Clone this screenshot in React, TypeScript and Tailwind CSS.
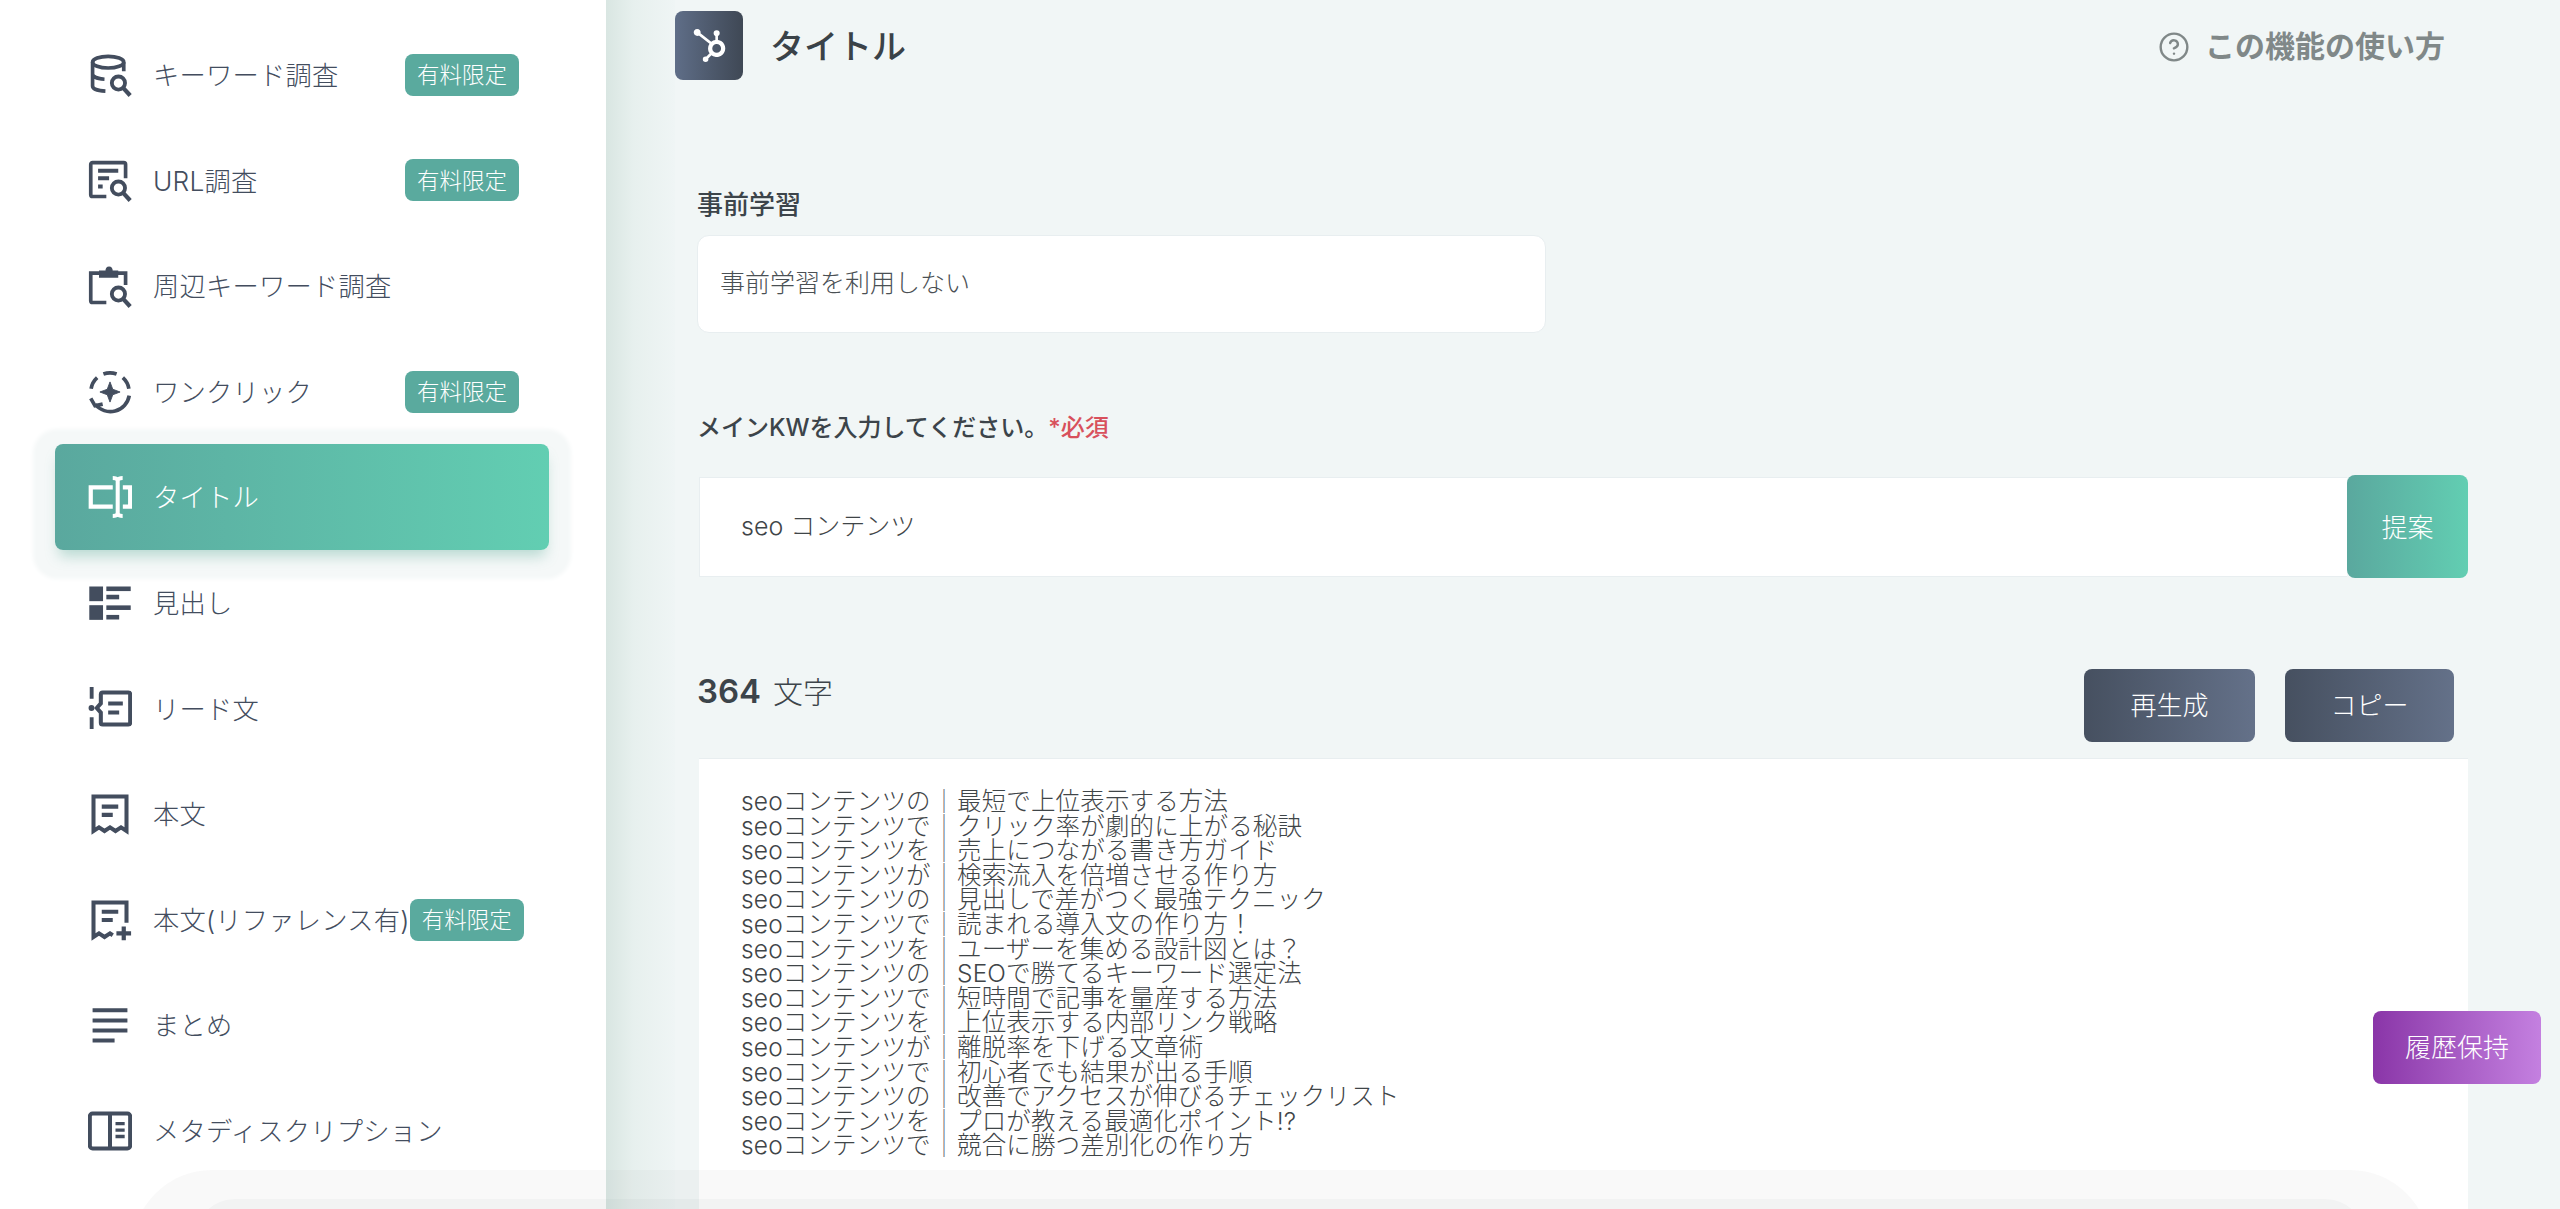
import type { ReactNode } from "react";
import { CircleHelp } from "lucide-react";
import { SiHubspot } from "react-icons/si";

type NavItem = {
  label: string;
  icon: ReactNode;
  paid?: boolean;
  active?: boolean;
  tight?: boolean;
};

function Svg({ children }: { children: ReactNode }) {
  return (
    <svg
      viewBox="0 0 24 24"
      fill="none"
      stroke="currentColor"
      strokeWidth="2"
      className="h-[44px] w-[44px] shrink-0"
    >
      {children}
    </svg>
  );
}

const lens = (
  <>
    <circle cx="16.6" cy="16.4" r="3.6" strokeWidth="2.1" />
    <path d="M19.200 19 23 23.200" strokeWidth="2.300" />
  </>
);

const navItems: NavItem[] = [
  {
    label: "キーワード調査",
    paid: true,
    icon: (
      <Svg>
        <ellipse cx="11" cy="5" rx="8.500" ry="3.200" />
        <path d="M2.500 5v13c0 1.600 2.800 2.600 7 2.800M2.500 11.500c0 1.500 2.800 2.600 6.500 2.800M19.500 5v5" />
        {lens}
      </Svg>
    ),
  },
  {
    label: "URL調査",
    paid: true,
    icon: (
      <Svg>
        <path d="M10 21H2.500a1 1 0 0 1-1-1V3.500a1 1 0 0 1 1-1h17a1 1 0 0 1 1 1V11" />
        <path d="M5.500 7h11M5.500 11h6M5.500 15.500h2.500" strokeWidth="2.200" />
        {lens}
      </Svg>
    ),
  },
  {
    label: "周辺キーワード調査",
    icon: (
      <Svg>
        <path d="M10 21H2.500a1 1 0 0 1-1-1V5h4.500M16 5h4.500v6.500" />
        <path d="M6.500 4h3.500c0-2.800 3-2.800 3 0h3v3h-9.500z" fill="currentColor" strokeWidth="1" />
        {lens}
      </Svg>
    ),
  },
  {
    label: "ワンクリック",
    paid: true,
    icon: (
      <Svg>
        <path d="M8.400 2.200A10.500 10.500 0 0 1 15.600 2.200M19 4.200A10.500 10.500 0 0 1 22.300 10.200M1.700 10.200A10.500 10.500 0 0 1 5 4.200M22.500 14A10.500 10.500 0 0 1 4 18.800" />
        <path d="M1.500 15.500 3.800 19.500 8 18.600" />
        <path
          d="M12 6.500l1.500 4 4 1.500-4 1.500-1.500 4-1.500-4-4-1.500 4-1.500z"
          fill="currentColor"
          strokeWidth="0.5"
        />
      </Svg>
    ),
  },
  {
    label: "タイトル",
    active: true,
    icon: (
      <Svg>
        <path d="M13.500 6.800H1.500v10.400h12M19 6.800h4v10.400h-4" strokeWidth="2.300" />
        <path d="M16.200 3v18M13.500 1.600c1.300 0 2.200.3 2.700 1.200.5-.9 1.400-1.200 2.700-1.200M13.500 22.400c1.300 0 2.200-.3 2.700-1.200.5.9 1.400 1.200 2.700 1.200" strokeWidth="2.200" />
      </Svg>
    ),
  },
  {
    label: "見出し",
    icon: (
      <Svg>
        <g fill="currentColor" stroke="none">
          <rect x="0.700" y="3" width="7.500" height="8" />
          <rect x="0.700" y="13.200" width="7.500" height="8" />
          <rect x="10" y="3" width="13.300" height="2.500" />
          <rect x="10" y="7.500" width="7" height="2.500" />
          <rect x="10" y="13.300" width="13.300" height="2.500" />
          <rect x="10" y="18.500" width="7" height="2.500" />
        </g>
      </Svg>
    ),
  },
  {
    label: "リード文",
    icon: (
      <Svg>
        <path d="M2 .5v6.500M2 17v6.500" strokeWidth="2.100" />
        <circle cx="1.900" cy="12" r="1.600" fill="currentColor" stroke="none" />
        <path d="M8 3.500h14a1 1 0 0 1 1 1V20a1 1 0 0 1-1 1H8a1 1 0 0 1-1-1v-5.500L4.800 12 7 9.500v-5a1 1 0 0 1 1-1z" strokeWidth="2.200" />
        <path d="M11 9.500h8M11 14.500h6" strokeWidth="2.200" />
      </Svg>
    ),
  },
  {
    label: "本文",
    icon: (
      <Svg>
        <path d="M3 2.500h18v18.800l-3-2-3 2-3-2-3 2-3-2-3 2z" strokeWidth="2.200" />
        <path d="M7.500 8h9M7.500 12.500h6" strokeWidth="2.300" />
      </Svg>
    ),
  },
  {
    label: "本文(リファレンス有)",
    paid: true,
    tight: true,
    icon: (
      <Svg>
        <path d="M21 13.500V2.500H3v18.800l3-2 3 2 3-2 1.500 1" strokeWidth="2.200" />
        <path d="M7.500 7.500h9M7.500 12h6" strokeWidth="2.300" />
        <path d="M19.500 15.500v7.500M15.500 19.300h8" strokeWidth="2.300" />
      </Svg>
    ),
  },
  {
    label: "まとめ",
    icon: (
      <Svg>
        <path d="M2.500 4h19M2.500 9.500h19M2.500 15h19M2.500 20.500h12" strokeWidth="2.200" />
      </Svg>
    ),
  },
  {
    label: "メタディスクリプション",
    icon: (
      <Svg>
        <rect x="1" y="2.500" width="22" height="19" rx="1.500" strokeWidth="2.200" />
        <path d="M12 2.500v19" strokeWidth="2.200" />
        <path d="M15 8h5M15 11.500h5M15 15h5" strokeWidth="1.800" />
      </Svg>
    ),
  },
];

const titles = [
  "seoコンテンツの｜最短で上位表示する方法",
  "seoコンテンツで｜クリック率が劇的に上がる秘訣",
  "seoコンテンツを｜売上につながる書き方ガイド",
  "seoコンテンツが｜検索流入を倍増させる作り方",
  "seoコンテンツの｜見出しで差がつく最強テクニック",
  "seoコンテンツで｜読まれる導入文の作り方！",
  "seoコンテンツを｜ユーザーを集める設計図とは？",
  "seoコンテンツの｜SEOで勝てるキーワード選定法",
  "seoコンテンツで｜短時間で記事を量産する方法",
  "seoコンテンツを｜上位表示する内部リンク戦略",
  "seoコンテンツが｜離脱率を下げる文章術",
  "seoコンテンツで｜初心者でも結果が出る手順",
  "seoコンテンツの｜改善でアクセスが伸びるチェックリスト",
  "seoコンテンツを｜プロが教える最適化ポイント!?",
  "seoコンテンツで｜競合に勝つ差別化の作り方",
];

function Sidebar() {
  return (
    <aside className="relative w-[606px] shrink-0 bg-white pt-[22px] text-[#434d5e]">
      {navItems.map((item) => (
        <div
          key={item.label}
          className={
            item.active
              ? "relative ml-[55px] flex h-[105.6px] w-[494px] items-center rounded-lg bg-gradient-to-r from-[#5aa89e] to-[#62ceb2] pl-[33px] text-white shadow-[0_10px_14px_-4px_rgba(90,170,150,0.4),0_7px_4px_22px_#f5f8f8]"
              : "flex h-[105.6px] items-center pl-[88px]"
          }
        >
          {item.icon}
          <span className="ml-[21px] whitespace-nowrap pt-[2px] text-[26.3px] font-light tracking-[0.2px]">
            {item.label}
          </span>
          {item.paid && (
            <span
              className={`flex h-[42px] w-[114px] items-center justify-center rounded-lg bg-[#5aaa9e] text-[22.5px] font-light text-white ${
                item.tight ? "ml-0" : "absolute left-[405px]"
              }`}
            >
              有料限定
            </span>
          )}
        </div>
      ))}
    </aside>
  );
}

function Header() {
  return (
    <div className="flex items-center pr-[115px] pt-[11px]">
      <div className="flex h-[69px] w-[68px] items-center justify-center rounded-lg bg-gradient-to-r from-[#5f6e88] to-[#3f4855] text-white">
        <SiHubspot className="h-[33px] w-[33px]" />
      </div>
      <h1 className="ml-[27px] pt-[2px] text-[34px] font-medium text-[#3a4248]">タイトル</h1>
      <a className="ml-auto flex items-center gap-[15px] pt-[2px] text-[30px] font-bold text-[#808888]">
        <CircleHelp className="h-[32px] w-[32px]" strokeWidth={1.8} />
        この機能の使い方
      </a>
    </div>
  );
}

function TitleRow({ title }: { title: string }) {
  const [head, rest] = title.split("｜");
  return (
    <div className="h-[24.6px] whitespace-nowrap">
      <span className="inline-block w-[190px]">{head}</span>
      <span className="inline-block w-[26px] text-center text-[24px] tracking-normal text-[#666b70]">｜</span>
      <span>{rest}</span>
    </div>
  );
}

export default function App() {
  return (
    <div className="relative flex h-[1209px] w-[2560px] overflow-hidden font-['Inter','Noto_Sans_CJK_JP','Noto_Sans',sans-serif]">
      <Sidebar />
      <main className="flex min-w-0 flex-1 bg-[#f1f6f6]">
        <div className="w-[69px] shrink-0 bg-gradient-to-r from-[#d9e6e2] via-[#e7f0ee] via-40% to-[#eff5f5]" />
        <div className="min-w-0 flex-1">
          <Header />
          <div className="pl-[22px] pr-[92px]">
            <label className="mt-[107px] block text-[26px] font-medium leading-[36px] text-[#3c444a]">
              事前学習
            </label>
            <div className="mt-[12px] flex h-[98px] w-[849px] items-center rounded-xl border border-[#e8eef0] bg-white pl-[22px] text-[25px] font-light text-[#4a5054]">
              事前学習を利用しない
            </div>

            <label className="mt-[79px] block text-[24px] font-medium leading-[32px] text-[#3c444a]">
              メインKWを入力してください。<span className="text-[#d8505c]">*必須</span>
            </label>
            <div className="ml-[2px] mt-[31px] flex h-[103px] items-center">
              <div className="flex h-[100px] flex-1 items-center border-y border-l border-[#e8eef0] bg-white pl-[41px] text-[25px] font-light text-[#3f4548]">
                seo コンテンツ
              </div>
              <button
                type="button"
                className="h-[103px] w-[121px] rounded-lg bg-gradient-to-r from-[#5aa89e] to-[#62ceb2] pt-[2px] text-[26px] font-light text-white"
              >
                提案
              </button>
            </div>

            <div className="mt-[91px] flex items-start justify-between pr-[14px]">
              <div className="flex h-[46px] items-center gap-[12px] text-[#3c444a]">
                <span className="text-[33px] font-semibold">364</span>
                <span className="text-[30px] font-light">文字</span>
              </div>
              <div className="flex gap-[30px]">
                <button
                  type="button"
                  className="h-[73px] w-[171px] rounded-lg bg-gradient-to-r from-[#465060] to-[#647189] text-[26px] font-light text-white"
                >
                  再生成
                </button>
                <button
                  type="button"
                  className="h-[73px] w-[169px] rounded-lg bg-gradient-to-r from-[#465060] to-[#647189] text-[26px] font-light text-white"
                >
                  コピー
                </button>
              </div>
            </div>

            <div className="ml-[2px] mt-[16px] h-[600px] border-t border-[#e8eef0] bg-white pl-[42px] pt-[30px] text-[24.5px] font-light leading-[24.6px] tracking-[0.15px] text-[#3f4548]">
              {titles.map((title) => (
                <TitleRow key={title} title={title} />
              ))}
            </div>
          </div>
        </div>
      </main>

      {/* bottom bar peeking in from below the fold */}
      <div className="absolute left-[132px] top-[1170px] h-[80px] w-[2298px] rounded-t-[80px] bg-[#5a6e6e]/[0.04]" />
      <div className="absolute left-[195px] top-[1199px] h-[60px] w-[2170px] rounded-t-[40px] bg-[#4a5a5a]/[0.04]" />

      <button
        type="button"
        className="absolute right-[19px] top-[1011px] h-[73px] w-[168px] rounded-lg bg-gradient-to-r from-[#8a35a8] to-[#c480e0] text-[26px] font-light text-white"
      >
        履歴保持
      </button>
    </div>
  );
}
